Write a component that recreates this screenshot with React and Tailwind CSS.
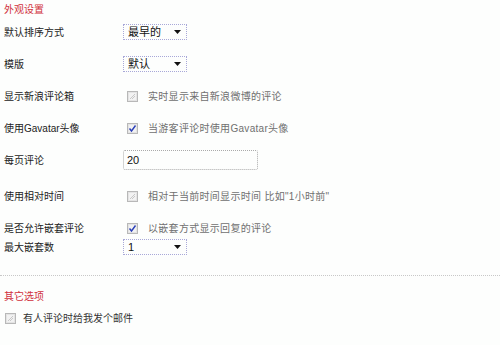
const font = { fontFamily: '"Liberation Sans", "Noto Sans CJK SC", sans-serif' };

const Box = ({ checked }) => (
  <svg width="11" height="11" viewBox="0 0 11 11" className="shrink-0">
    <rect x="0.5" y="0.5" width="10" height="10" fill="#e4e4e4" stroke="#b8b8b8" />
    <rect x="2" y="2" width="7" height="7" fill="#f2f2f2" />
    {checked ? (
      <path d="M2.5 5.5 L4.5 8 L8.5 2.5" fill="none" stroke="#2a3fb8" strokeWidth="1.4" />
    ) : (
      <path d="M3 8 L8 3 M5 8 L8 5" stroke="#c8c8c8" strokeWidth="1" />
    )}
  </svg>
);

const Select = ({ value }) => (
  <div className="w-[64px] h-[16px] border border-dotted border-[#a8a8d8] flex items-center justify-between pl-[4px] pr-[5px] text-[11px] text-[#111]">
    <span>{value}</span>
    <svg width="7" height="4" viewBox="0 0 7 4">
      <path d="M0 0 L7 0 L3.5 4 Z" fill="#111" />
    </svg>
  </div>
);

const Row = ({ label, h, children }) => (
  <div className={`flex items-center ${h}`}>
    <div className="w-[119px] shrink-0 text-[#222]">{label}</div>
    <div className="flex items-center">{children}</div>
  </div>
);

const Check = ({ checked, text }) => (
  <div className="flex items-center pl-[4px] gap-[10px]">
    <Box checked={checked} />
    <span className="text-[#707070] tracking-[0.3px]">{text}</span>
  </div>
);

export default function App() {
  return (
    <div className="w-[500px] h-[345px] bg-[#fdfefd] text-[10px] overflow-hidden" style={font}>
      <div className="pl-[4px]">
        <div className="h-[16px] pt-[3px] text-[#d0303c] leading-[14px]">外观设置</div>
        <Row label="默认排序方式" h="h-[32px]">
          <Select value="最早的" />
        </Row>
        <Row label="模版" h="h-[32px]">
          <Select value="默认" />
        </Row>
        <Row label="显示新浪评论箱" h="h-[32px]">
          <Check text="实时显示来自新浪微博的评论" />
        </Row>
        <Row label="使用Gavatar头像" h="h-[32px]">
          <Check checked text="当游客评论时使用Gavatar头像" />
        </Row>
        <Row label="每页评论" h="h-[32px]">
          <div className="w-[135px] h-[20px] border border-dotted border-[#aaa] rounded-[2px] flex items-center pl-[3px] text-[11px] text-[#111]">
            20
          </div>
        </Row>
        <div className="mt-[4px]">
          <Row label="使用相对时间" h="h-[32px]">
            <Check text={'相对于当前时间显示时间 比如"1小时前"'} />
          </Row>
        </div>
        <div className="mt-[5px]">
          <Row label="是否允许嵌套评论" h="h-[22px]">
            <Check checked text="以嵌套方式显示回复的评论" />
          </Row>
        </div>
        <Row label="最大嵌套数" h="h-[16px]">
          <Select value="1" />
        </Row>
      </div>
      <div className="mt-[20px] border-t border-dotted border-[#c8c8c8]" />
      <div className="pl-[4px]">
        <div className="mt-[10px] h-[20px] flex items-center text-[#d0303c]">其它选项</div>
        <div className="mt-[2px] h-[20px] flex items-center gap-[7px] pl-[1px]">
          <Box />
          <span className="text-[#333]">有人评论时给我发个邮件</span>
        </div>
      </div>
    </div>
  );
}
